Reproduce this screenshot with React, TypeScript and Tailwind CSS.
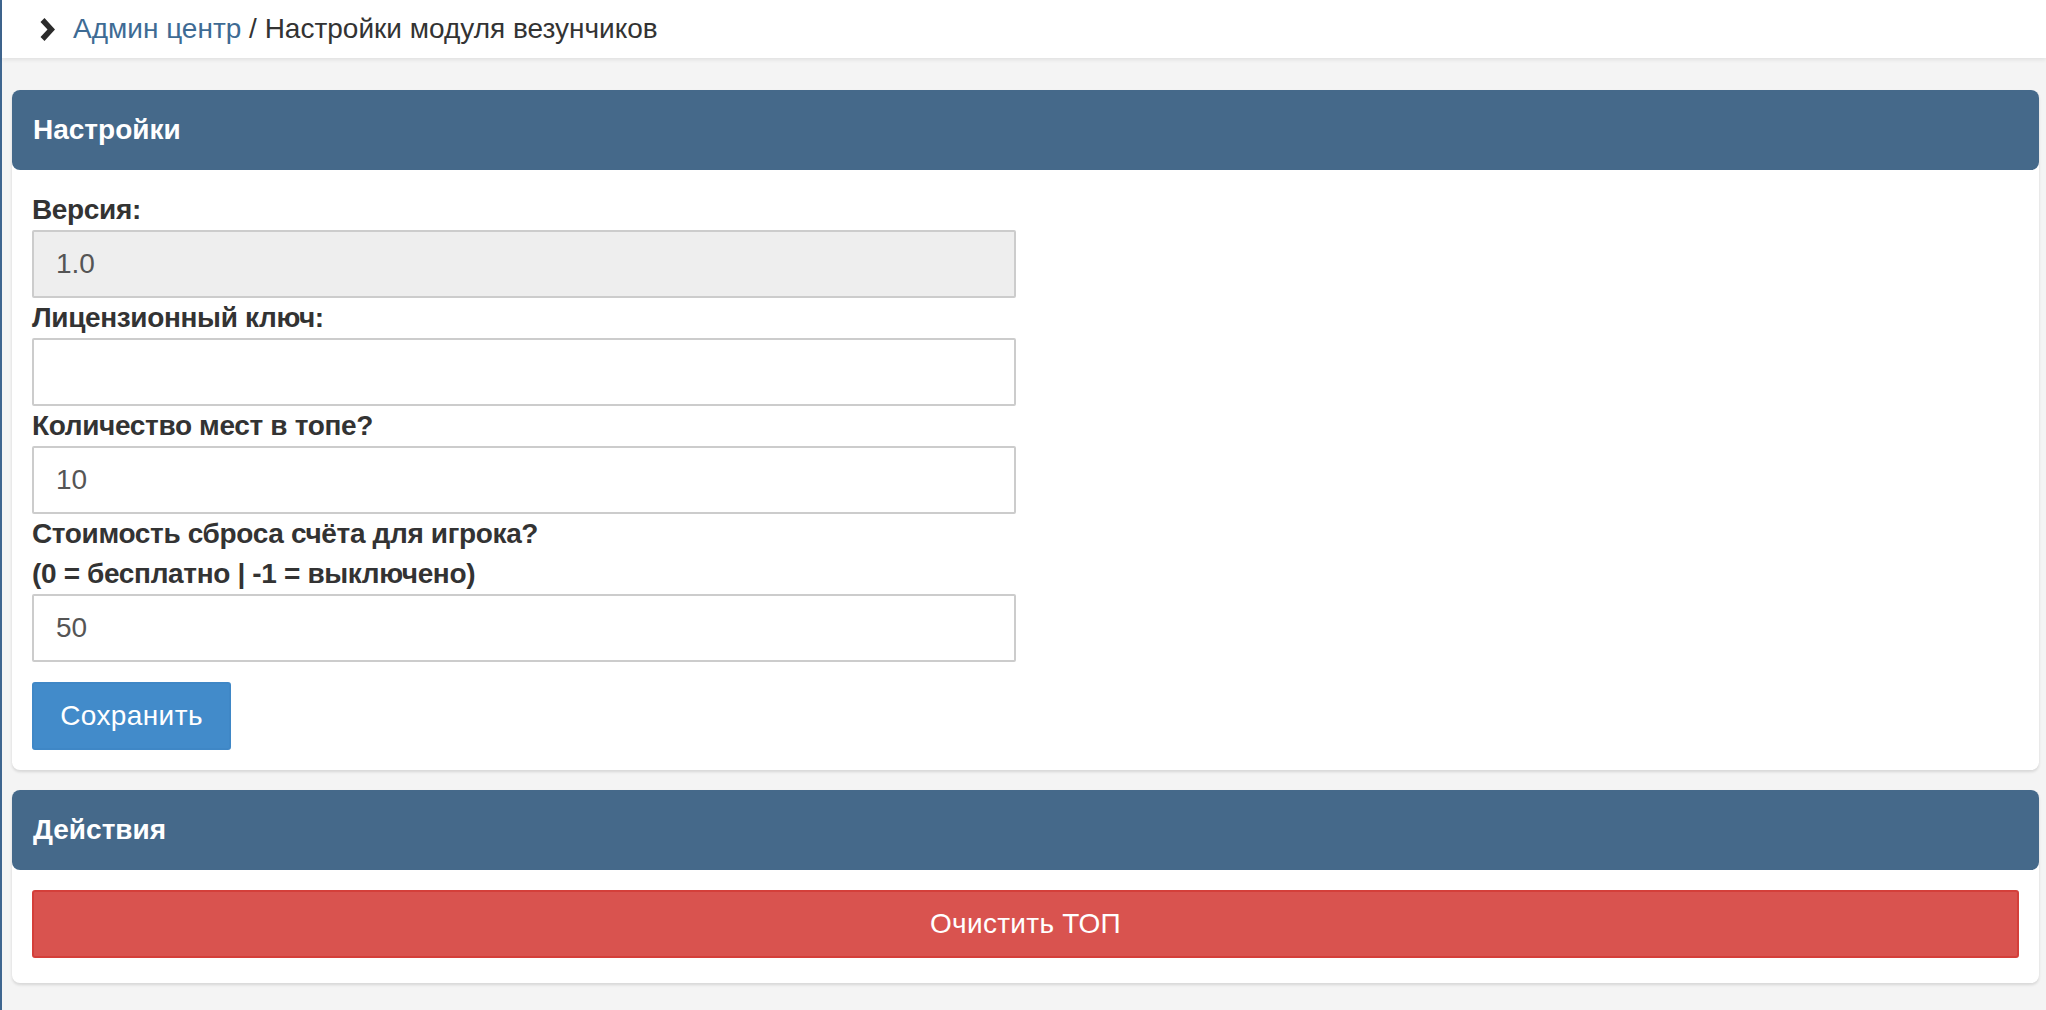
import React from 'react'

const font = { fontFamily: '"Liberation Sans", Arial, Helvetica, sans-serif' }

function Chevron() {
  return (
    <svg width="17" height="23" viewBox="0 0 17 23" className="shrink-0">
      <path d="M2.5 4 L6.5 0 L17 11.5 L6.5 23 L2.5 19 L9.5 11.5 Z" fill="#2b2b2b" />
    </svg>
  )
}

function Field({ label, value, disabled }: { label: React.ReactNode; value?: string; disabled?: boolean }) {
  return (
    <div>
      <div className="text-[28px] leading-[40px] font-bold text-[#333] tracking-[-0.35px]">{label}</div>
      <div
        className={`w-[984px] h-[68px] border-2 border-[#ccc] rounded-[2px] pl-[22px] flex items-center text-[28px] text-[#555] ${
          disabled ? 'bg-[#eee]' : 'bg-white'
        }`}
      >
        {value}
      </div>
    </div>
  )
}

function Box({ title, children, bottom = 'pb-5' }: { title: string; children: React.ReactNode; bottom?: string }) {
  return (
    <div className="bg-white rounded-lg shadow-[0_2px_3px_rgba(0,0,0,0.12)]">
      <div className="h-20 bg-[#45698a] rounded-lg flex items-center pl-[21px]">
        <h3 className="text-[28px] font-bold text-white">{title}</h3>
      </div>
      <div className={`px-5 pt-5 ${bottom}`}>{children}</div>
    </div>
  )
}

export default function App() {
  return (
    <div style={font} className="flex min-h-[1010px] bg-[#f4f4f4]">
      <div className="w-[2px] bg-[#3f6690] shrink-0" />
      <div className="flex-1 flex flex-col">
        <div className="h-[58px] bg-white shadow-[0_2px_4px_rgba(0,0,0,0.08)] flex items-center pl-9 gap-[18px] relative z-10">
          <Chevron />
          <div className="text-[28px] text-[#333] leading-[40px]">
            <span className="text-[#3e6b94]">Админ центр</span> / Настройки модуля везунчиков
          </div>
        </div>

        <div className="mt-8 ml-[10px] mr-[7px] flex flex-col gap-5">
          <Box title="Настройки">
            <Field label="Версия:" value="1.0" disabled />
            <Field label="Лицензионный ключ:" />
            <Field label="Количество мест в топе?" value="10" />
            <Field
              label={
                <>
                  Стоимость сброса счёта для игрока?
                  <br />
                  (0 = бесплатно | -1 = выключено)
                </>
              }
              value="50"
            />
            <button className="mt-5 h-[68px] w-[199px] bg-[#428bca] border-2 border-[#3f87c6] rounded-[3px] text-white text-[28px] tracking-[0.4px]">
              Сохранить
            </button>
          </Box>

          <Box title="Действия" bottom="pb-[25px]">
            <button className="w-full h-[68px] bg-[#d9534f] border-2 border-[#d43f3a] rounded-[3px] text-white text-[28px] tracking-[0.3px]">
              Очистить ТОП
            </button>
          </Box>
        </div>
      </div>
    </div>
  )
}
